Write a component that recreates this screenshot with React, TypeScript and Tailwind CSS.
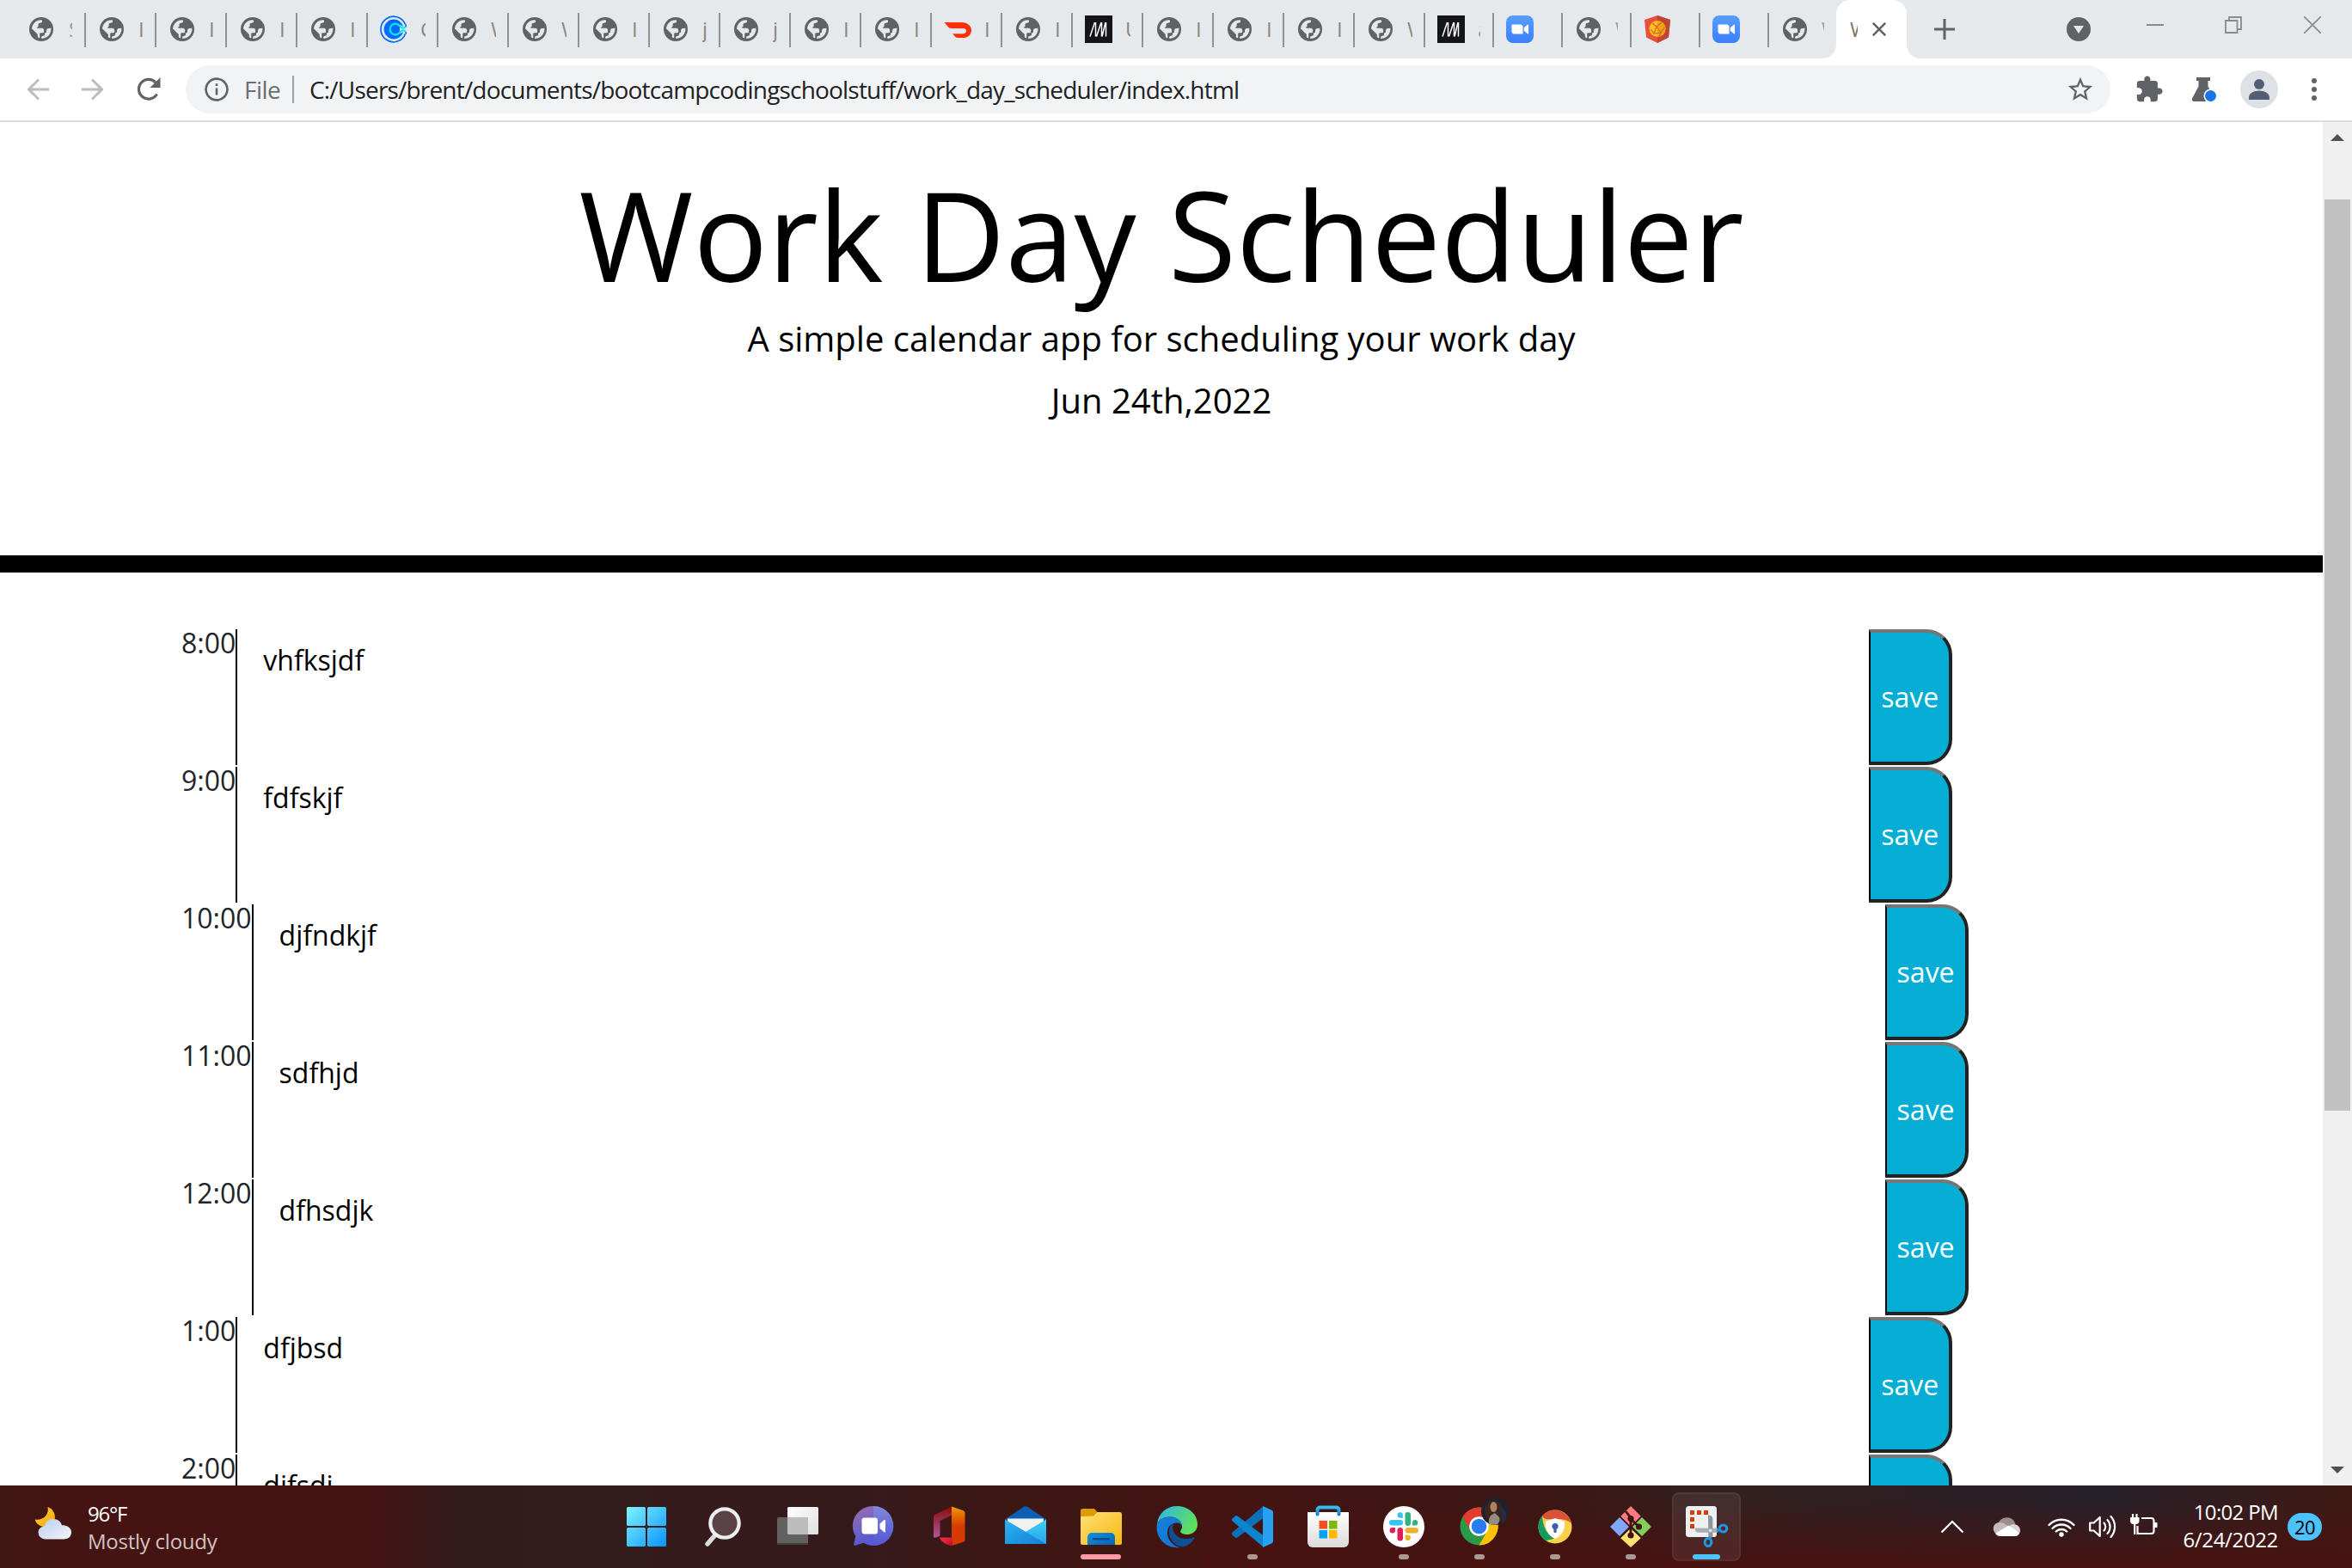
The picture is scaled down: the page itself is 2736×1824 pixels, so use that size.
import React from "react";

type IconKind = "globe" | "calendly" | "doordash" | "m" | "zoom" | "shield";

/* ---------- tab icons ---------- */

function Globe() {
  return (
    <svg viewBox="0.5 0 32 32" className="size-8 shrink-0">
      <circle cx="16.5" cy="16" r="14" fill="#5f6368" />
      <path
        d="M5.5 15.5C5.8 9.5 10.5 5.4 16 5.2c1.4 0 1.6.6 1.6 1.6 0 1.400-1 1.900-2.600 1.900-1.500 0-1.900.800-1.900 1.900v1.600c0 .700-.500 1.100-1.300 1.200v1.400h5.400c1.600 0 2.400.900 2.400 2.400v1.700c0 .900-.600 1.300-1.400 1.300h-2.100c-1 0-1.400.500-1.400 1.500v4.600c-1.600 0-2.400-.800-2.400-2.200v-2.200L7.500 17.200c-.700-.700-1.300-1-2-1.700z"
        fill="#e5e9ec"
      />
      <path
        d="M27.800 14.500c.800 6-3.600 11.700-9.600 12.300-1.500.100-2-.400-1.600-1.500.300-.900 1-1.300 2.200-1.500 1.300-.200 1.700-.700 1.700-1.800 0-1.400.700-2.100 2-2.200v-1.700c0-2.100 1-2.900 2.700-3 1 0 1.700-.200 2.600-.600z"
        fill="#e5e9ec"
      />
    </svg>
  );
}

function Calendly() {
  return (
    <svg viewBox="0 0 32 32" className="size-8 shrink-0" fill="none">
      <path d="M29.500 10.500a14.800 14.800 0 1 0 0 11" stroke="#006bff" strokeWidth="1.700" />
      <path d="M29.800 10.300c1.600 2.200-.300 3.700-2.300 5.200M29.800 21.700c1.600-2.200-.300-3.700-2.300-5.200" stroke="#006bff" strokeWidth="1.500" />
      <circle cx="16" cy="16" r="11.400" fill="#006bff" />
      <path d="M32 16l-9-5.500v11z" fill="#e5e9ec" />
      <path d="M30 13.200c-3 3-5.500.800-7.200-1.200C21 10 19 9.500 17 9.700a6.400 6.400 0 0 0 0 12.600c2 .200 4-.300 5.800-2.300 1.700-2 4.200-4.200 7.200-1.200" stroke="#0ae8f0" strokeWidth="2.200" />
    </svg>
  );
}

function DoorDash() {
  return (
    <svg viewBox="0 0 32 32" className="size-8 shrink-0">
      <path d="M.500 8H21c6 0 11 4 11 9s-4 9-9 9h-7c-1.200 0-2-.500-2.700-1.200L10 21.300h12c2.600 0 4-1.600 4-3.400s-1.400-3-4-3H8.500c-1.500 0-2.300-.400-3.100-1.200z" fill="#ff3008" />
    </svg>
  );
}

function MLogo() {
  return (
    <svg viewBox="0 0 32 32" className="size-8 shrink-0">
      <rect width="32" height="32" fill="#14141a" />
      <path d="M6 24.500L11.500 8M12.500 8v16.500M13.500 24.500L19 8M19.500 8v16.500M20 24.500L24 8M24.500 8v16.500" stroke="#fff" strokeWidth="1.500" fill="none" />
    </svg>
  );
}

function ZoomLogo() {
  return (
    <svg viewBox="0 0 32 32" className="size-8 shrink-0">
      <rect width="32" height="32" rx="8" fill="url(#zoomBg)" />
      <path d="M6.500 10.500h10a3 3 0 0 1 3 3v8h-10a3 3 0 0 1-3-3z" fill="#fff" />
      <path d="M20.800 14.300l4.200-3.500c.500-.400 1-.200 1 .400v9.600c0 .600-.500.800-1 .400l-4.200-3.500z" fill="#fff" />
    </svg>
  );
}

function Shield() {
  return (
    <svg viewBox="0 0 32 32" className="size-8 shrink-0">
      <path d="M16 0l15 5-2 20.500L16 32 3 25.500 1 5z" fill="#e8503e" />
      <path d="M16 0l15 5-2 20.500L16 32z" fill="#c14437" />
      <circle cx="16" cy="15.500" r="9.500" fill="#ffc01e" />
      <path d="M16 6a9.500 9.500 0 0 1 0 19z" fill="#eea50f" />
      <path d="M10 9l5 4 6-5M15 13l-3 8 8-1 4-6M12 21l-4-5M20 20l-2 5M15 13l5 7" stroke="#d9633a" strokeWidth="1.200" fill="none" />
    </svg>
  );
}

function TabIcon({ kind }: { kind: IconKind }) {
  switch (kind) {
    case "calendly":
      return <Calendly />;
    case "doordash":
      return <DoorDash />;
    case "m":
      return <MLogo />;
    case "zoom":
      return <ZoomLogo />;
    case "shield":
      return <Shield />;
    default:
      return <Globe />;
  }
}

const wideTabs: [IconKind, string][] = [
  ["globe", "I"],
  ["globe", "I"],
  ["globe", "I"],
  ["globe", "I"],
  ["calendly", "C"],
  ["globe", "W"],
  ["globe", "W"],
  ["globe", "I"],
  ["globe", "j"],
  ["globe", "j"],
  ["globe", "I"],
  ["globe", "I"],
  ["doordash", "I"],
  ["globe", "I"],
  ["m", "U"],
  ["globe", "I"],
  ["globe", "I"],
  ["globe", "I"],
  ["globe", "W"],
];

const narrowTabs: [IconKind, string][] = [
  ["m", "a"],
  ["zoom", ""],
  ["globe", "W"],
  ["shield", ""],
  ["zoom", ""],
  ["globe", "W"],
];

function Separator() {
  return <span className="mt-[2px] h-10 w-[2px] shrink-0 bg-[#8e9397]" />;
}

function TabStrip() {
  return (
    <div className="flex h-[68px] bg-[#e5e9ec]">
      <div className="flex w-[98px] shrink-0 items-center pl-[32px]">
        <Globe />
        <span className="ml-[16px] w-[4px] overflow-hidden text-[24px] leading-8 text-[#a39a94]">S</span>
      </div>
      {wideTabs.map(([kind, text], i) => (
        <div key={i} className="flex w-[82px] shrink-0 items-center">
          <Separator />
          <span className="w-[14px] shrink-0" />
          <TabIcon kind={kind} />
          <span className="ml-[15px] w-[6px] shrink-0 overflow-hidden text-[24px] leading-8 text-[#8d8580]">{text}</span>
        </div>
      ))}
      {narrowTabs.map(([kind, text], i) => (
        <div key={i} className="flex w-[80px] shrink-0 items-center">
          <Separator />
          <span className="w-[14px] shrink-0" />
          <TabIcon kind={kind} />
          <span className="ml-[15px] w-[3px] shrink-0 overflow-hidden text-[24px] leading-8 text-[#a39a94]">{text}</span>
        </div>
      ))}
      <div className="flex h-[68px] shrink-0 items-end">
        <svg viewBox="0 0 16 16" className="-ml-4 size-4">
          <path d="M16 0v16H0C9 16 16 9 16 0z" fill="#fff" />
        </svg>
        <div className="flex h-[68px] w-[82px] items-center rounded-t-[16px] bg-white pl-4">
          <span className="w-[9px] overflow-hidden text-[24px] leading-8 text-[#77726e]">W</span>
          <svg viewBox="0 0 16 16" className="ml-[17px] size-4" stroke="#5f6368" strokeWidth="2.600">
            <path d="M.8.800l14.400 14.400M15.200.800L.8 15.200" />
          </svg>
        </div>
        <svg viewBox="0 0 16 16" className="size-4">
          <path d="M0 0v16h16C7 16 0 9 0 0z" fill="#fff" />
        </svg>
      </div>
      <div className="flex flex-1 items-start">
        <svg viewBox="0 0 24 24" className="mt-[22px] ml-[16px] size-6" stroke="#5f6368" strokeWidth="3">
          <path d="M12 0v24M0 12h24" />
        </svg>
        <svg viewBox="0 0 28 28" className="mt-5 ml-auto size-7">
          <circle cx="14" cy="14" r="14" fill="#5f6368" />
          <path d="M8 10h12l-6 9z" fill="#e5e9ec" />
        </svg>
        <div className="mt-[28px] ml-[65px] h-[2px] w-5 bg-[#8a8a8a]" />
        <svg viewBox="0 0 20 20" className="mt-[19px] ml-[71px] size-5" fill="none" stroke="#8a8a8a" strokeWidth="1.800">
          <path d="M1 5h13.500v14H1zM5 5V1h14v14h-4.500" />
        </svg>
        <svg viewBox="0 0 20 20" className="mt-[19px] mr-[36px] ml-[72px] size-5" stroke="#8a8a8a" strokeWidth="1.700">
          <path d="M0 0l20 20M20 0L0 20" />
        </svg>
      </div>
    </div>
  );
}

/* ---------- toolbar ---------- */

function Toolbar() {
  return (
    <div className="flex h-[74px] items-center border-b-2 border-[#dcdcdc] bg-white">
      <svg viewBox="0 0 26 26" className="ml-[31px] size-[26px]" fill="none" stroke="#babcbe" strokeWidth="3">
        <path d="M26 13H2.500M14 1.500L2.500 13 14 24.500" />
      </svg>
      <svg viewBox="0 0 26 26" className="ml-[38px] size-[26px]" fill="none" stroke="#babcbe" strokeWidth="3">
        <path d="M0 13h23.500M12 1.500L23.500 13 12 24.500" />
      </svg>
      <svg viewBox="0 0 28 28" className="ml-[38px] size-7" fill="none">
        <path d="M23.500 19.500A11.300 11.300 0 1 1 22 6" stroke="#5f6368" strokeWidth="3.200" />
        <path d="M27.500 0v12h-12z" fill="#5f6368" />
      </svg>
      <div className="ml-[29px] flex h-14 w-[2239px] items-center rounded-full bg-[#f1f3f4]">
        <svg viewBox="0 0 28 28" className="ml-[22px] size-7" fill="none" stroke="#5f6368" strokeWidth="2.600">
          <circle cx="14" cy="14" r="12.400" />
          <path d="M14 12.500v8M14 7.300v2.800" />
        </svg>
        <span className="-mt-px ml-[18px] w-[42px] text-[28px] tracking-[-0.500px] text-[#6a6d71]">File</span>
        <span className="ml-[14px] h-8 w-[2px] bg-[#9aa0a6]" />
        <span className="-mt-px ml-[18px] text-[28px] tracking-[-0.810px] whitespace-nowrap text-[#202124]">
          C:/Users/brent/documents/bootcampcodingschoolstuff/work_day_scheduler/index.html
        </span>
        <svg viewBox="0 0 24 24" className="mr-[18px] ml-auto size-[34px]" fill="#5f6368">
          <path d="M22 9.240l-7.190-.620L12 2 9.190 8.630 2 9.240l5.460 4.730L5.820 21 12 17.270 18.180 21l-1.630-7.030L22 9.240zM12 15.400l-3.760 2.270 1-4.280-3.320-2.880 4.380-.380L12 6.100l1.710 4.040 4.380.380-3.320 2.880 1 4.280L12 15.400z" />
        </svg>
      </div>
      <svg viewBox="0 0 24 24" className="ml-[28px] size-[34px]" fill="#5f6368">
        <path d="M20.500 11H19V7c0-1.100-.900-2-2-2h-4V3.500C13 2.120 11.880 1 10.500 1S8 2.120 8 3.500V5H4c-1.100 0-1.990.900-1.990 2v3.800H3.500c1.490 0 2.700 1.210 2.700 2.700s-1.210 2.700-2.700 2.700H2V20c0 1.100.900 2 2 2h3.800v-1.500c0-1.490 1.210-2.700 2.700-2.700 1.490 0 2.700 1.210 2.700 2.700V22H17c1.100 0 2-.900 2-2v-4h1.500c1.380 0 2.500-1.120 2.500-2.500S21.880 11 20.500 11z" />
      </svg>
      <svg viewBox="0 0 30 30" className="ml-[32px] size-[30px]">
        <path d="M6 1h16v4h-2.500v6.500L27 25c1 2-.300 4-2.300 4H3.300C1.300 29 .2 27 1.200 25.200L8.500 11.500V5H6z" fill="#5f6368" />
        <circle cx="22.500" cy="22.500" r="8" fill="#fff" />
        <circle cx="22.500" cy="22.500" r="6.500" fill="#1a73e8" />
      </svg>
      <svg viewBox="0 0 44 44" className="ml-[27px] size-11">
        <circle cx="22" cy="22" r="22" fill="#dee1e6" />
        <circle cx="22" cy="16" r="6" fill="#535e75" />
        <path d="M10 34v-2.500c0-5 5.500-8 12-8s12 3 12 8V34z" fill="#535e75" />
      </svg>
      <svg viewBox="0 0 6 26" className="ml-[39px] h-[26px] w-[6px]" fill="#5f6368">
        <circle cx="3" cy="3" r="3" />
        <circle cx="3" cy="13" r="3" />
        <circle cx="3" cy="23" r="3" />
      </svg>
    </div>
  );
}

/* ---------- page ---------- */

const blocks = [
  { hour: "8:00", text: "vhfksjdf" },
  { hour: "9:00", text: "fdfskjf" },
  { hour: "10:00", text: "djfndkjf" },
  { hour: "11:00", text: "sdfhjd" },
  { hour: "12:00", text: "dfhsdjk" },
  { hour: "1:00", text: "dfjbsd" },
  { hour: "2:00", text: "djfsdj" },
];

function Planner() {
  return (
    <main className="h-[1586px] flex-1 overflow-hidden bg-white text-black">
      <header className="flex h-[524px] flex-col items-center border-b-[20px] border-black pt-[44px]">
        <h1 className="text-[144px] leading-[173px]">Work Day Scheduler</h1>
        <p className="mt-[5px] text-[40px] leading-[60px]">A simple calendar app for scheduling your work day</p>
        <p className="mt-3 text-[40px] leading-[60px]">Jun 24th,2022</p>
      </header>
      <section className="flex flex-col gap-[2px] pt-[66px] pl-[211px]">
        {blocks.map((b) => (
          <div key={b.hour} className="flex h-[158px] text-[32px]">
            <div className="shrink-0 border-r-2 border-black leading-8 text-[#212529]">{b.hour}</div>
            <div className="w-[1898px] shrink-0 pt-5 pl-[30px] leading-8">{b.text}</div>
            <button className="w-[97px] shrink-0 rounded-r-[30px] border-4 border-t-[#767676] border-r-[#222] border-b-[#222] border-l-2 border-l-black bg-[#06aed5] text-white">
              save
            </button>
          </div>
        ))}
      </section>
    </main>
  );
}

function Scrollbar() {
  return (
    <div className="flex h-[1586px] w-[34px] shrink-0 flex-col items-center bg-[#f0f0f0]">
      <svg viewBox="0 0 16 8" className="mt-[14px] h-2 w-4">
        <path d="M8 0l8 8H0z" fill="#505050" />
      </svg>
      <div className="mt-[68px] h-[1060px] w-[30px] bg-[#c1c1c1]" />
      <svg viewBox="0 0 16 8" className="mt-auto mb-[14px] h-2 w-4">
        <path d="M0 0h16L8 8z" fill="#505050" />
      </svg>
    </div>
  );
}

/* ---------- taskbar ---------- */

function Defs() {
  const g = (id: string, a: string, b: string, x2 = "1", y2 = "1") => (
    <linearGradient id={id} x1="0" y1="0" x2={x2} y2={y2}>
      <stop offset="0" stopColor={a} />
      <stop offset="1" stopColor={b} />
    </linearGradient>
  );
  return (
    <svg className="absolute size-0">
      <defs>
        <linearGradient id="win" gradientUnits="userSpaceOnUse" x1="1" y1="1" x2="47" y2="47">
          <stop offset="0" stopColor="#7df4ff" />
          <stop offset="1" stopColor="#0a93ff" />
        </linearGradient>
        {g("zoomBg", "#579dff", "#3d80ff", "0", "1")}
        {g("moon", "#ffd52e", "#f5a60a")}
        {g("cloud", "#b9cdf3", "#f4f5f8")}
        {g("task", "#ffffff", "#dedede")}
        {g("chat", "#9a6fae", "#4f57d6", "0.400", "1")}
        {g("chat2", "#7f9bf0", "#5a58cf", "0", "1")}
        {g("offL", "#8a0f0a", "#b0549d", "0", "1")}
        {g("offR", "#f09a00", "#d83b01", "0", "0.500")}
        {g("offB", "#ff2a45", "#b5142a")}
        {g("mailL", "#2eb3ec", "#1280dd")}
        {g("mailR", "#3fd0f8", "#2ba4ea", "0", "1")}
        {g("fold", "#ffe07a", "#f7b80e")}
        {g("foldB", "#1493df", "#0863b5")}
        {g("edgeT", "#2fb4ee", "#5fe05a", "1", "0.500")}
        {g("edgeB", "#1583d8", "#0f72dc")}
        {g("bag", "#ffffff", "#dcdcdc", "0", "1")}
        {g("bagH", "#37bdf5", "#1580d5", "0", "1")}
      </defs>
    </svg>
  );
}

const Start = () => (
  <g fill="url(#win)">
    <rect x="1" y="1" width="22" height="22" rx="1.500" />
    <rect x="25" y="1" width="22" height="22" rx="1.500" />
    <rect x="1" y="25" width="22" height="22" rx="1.500" />
    <rect x="25" y="25" width="22" height="22" rx="1.500" />
  </g>
);

const Search = () => (
  <g>
    <path d="M16.500 33L7 44" stroke="#d9dcde" strokeWidth="5.500" strokeLinecap="round" />
    <circle cx="27" cy="20" r="16.700" fill="#5a4244" stroke="#eceeef" strokeWidth="4.200" />
  </g>
);

const TaskView = () => (
  <g>
    <rect x="12" y="1" width="36" height="32" rx="1.500" fill="url(#task)" />
    <path d="M0 14.500a1.500 1.500 0 0 1 1.500-1.500H36v30.500a1.500 1.500 0 0 1-1.500 1.500h-33A1.500 1.500 0 0 1 0 43.500z" fill="#636060" />
    <path d="M12 13h24v20H13.500a1.500 1.500 0 0 1-1.500-1.500z" fill="#bdbcbc" />
    <path d="M0 43h36v.500a1.500 1.500 0 0 1-1.500 1.500h-33A1.500 1.500 0 0 1 0 43.500z" fill="#454040" />
  </g>
);

const Chat = () => (
  <g>
    <path d="M24 0a23 23 0 1 1-11.500 42.700L3.500 45.800c-1.600.500-2.600-.700-2.200-2.100l2-8.600A23 23 0 0 1 24 0z" fill="url(#chat)" />
    <path d="M24 0a23 23 0 0 1 23 23c0 14-10 23-23 23z" fill="url(#chat2)" opacity=".6" />
    <rect x="10.500" y="13.500" width="18.500" height="19" rx="3" fill="#fff" />
    <path d="M31.500 20.500l4.500-4c1-.900 2-.500 2 .700v12c0 1.200-1 1.600-2 .700l-4.500-4z" fill="#fff" />
  </g>
);

const Office = () => (
  <g>
    <path d="M27 .500l1.500 9.500-15 7v16.500c0 1.500-6.500 4.500-7.500 2.500V13.500c0-2 1-3 2.500-4z" fill="url(#offL)" />
    <path d="M27 .500l13 4.500c1.500.500 2.500 1.500 2.500 3v31c0 1.500-1 2.500-2.500 3L27 46z" fill="url(#offR)" />
    <path d="M13 36.500h15v9l-2 .500c-5-1-10-4-12.500-8z" fill="url(#offB)" />
  </g>
);

const Mail = () => (
  <g>
    <path d="M0 15.500L21.500 1c1.500-1 3.500-1 5 0L48 15.500V18H0z" fill="#0b5fb5" />
    <path d="M3 14.500h42V32H3z" fill="#f1f1f1" />
    <path d="M48 15.500V44H24L14 36z" fill="url(#mailR)" />
    <path d="M0 15.500L48 44H0z" fill="url(#mailL)" />
  </g>
);

const Explorer = () => (
  <g>
    <path d="M0 5.500A2.500 2.500 0 0 1 2.500 3H16l4 4.500V14H0z" fill="#dd9c00" />
    <path d="M0 12l15-.500 4.500-4.500h26A2.500 2.500 0 0 1 48 9.500V43a2 2 0 0 1-2 2H2a2 2 0 0 1-2-2z" fill="url(#fold)" />
    <path d="M8 45V36a5 5 0 0 1 5-5h22a5 5 0 0 1 5 5v9z" fill="url(#foldB)" />
    <rect x="14" y="37" width="20" height="2.500" rx="1.200" fill="#0a4c8b" />
  </g>
);

const Edge = () => (
  <g>
    <path d="M1 20C3 8 12 0 24 0c14 0 24 10 24 21 0 8-6 12-12 12-5 0-8-1.500-8-3.500 0-1.500 2-2.500 2-6 0-5-5-11-14-11C9 12.500 3 16 1 20z" fill="url(#edgeT)" />
    <path d="M1 20c3-5 8-7.500 15-7.500 9 0 14 6 14 11C24 16 13 20 13 31c0 8 6 15 14 17C12 50-2 37 1 20z" fill="url(#edgeB)" />
    <path d="M20 20c-3 2-5 5-5 10 0 9 7 17 16 17.500 6-1.500 10.500-5 13.500-10 .500-1-.500-1.700-1.500-1.200-3 1.500-6 1.700-9 1.700-9 0-15-7-15-13z" fill="#0e4f95" />
    <path d="M20.500 20.500c3.500-2 8-1 9.500 3 0 3.500-2 4.500-2 6 0 2 3 3.500 8 3.500-7 4-15-2-15.500-12.500z" fill="#3c1513" />
  </g>
);

const VSCode = () => (
  <g>
    <path d="M36.500 0v14L6.500 36.500c-1 .700-2 .700-2.800 0L.6 33.700c-1-.900-1-2.200 0-3.100z" fill="#0b70b8" />
    <path d="M.6 14.500l3.100-2.900c.800-.700 1.900-.700 2.800 0L36.500 34v13.500L.6 17.500c-1-.900-1-2.100 0-3z" fill="#0a85d0" />
    <path d="M36 0l10.500 4.800c1 .500 1.500 1.200 1.500 2.200v34c0 1-.500 1.800-1.500 2.300L36 48z" fill="#25a1f0" />
  </g>
);

const Store = () => (
  <g>
    <path d="M0 7h48v35a6 6 0 0 1-6 6H6a6 6 0 0 1-6-6z" fill="url(#bag)" />
    <path d="M11.500 9.500V4.500a3 3 0 0 1 3-3h19a3 3 0 0 1 3 3v5" fill="none" stroke="url(#bagH)" strokeWidth="4" strokeLinecap="round" />
    <rect x="13.500" y="17" width="9.500" height="9.500" fill="#f25022" />
    <rect x="25" y="17" width="9.500" height="9.500" fill="#7fba00" />
    <rect x="13.500" y="28" width="9.500" height="9.500" fill="#00a4ef" />
    <rect x="25" y="28" width="9.500" height="9.500" fill="#ffb900" />
  </g>
);

const Slack = () => (
  <g>
    <circle cx="24" cy="24" r="24" fill="#fff" />
    <g fill="#36c5f0">
      <rect x="7" y="16" width="16" height="6.500" rx="3.200" />
      <path d="M16.500 10.500a3.200 3.200 0 0 1 6.400 0v3.200h-3.200a3.200 3.200 0 0 1-3.200-3.200z" />
    </g>
    <g fill="#2eb67d">
      <rect x="25.500" y="7" width="6.500" height="16" rx="3.200" />
      <path d="M34 22.500v-3.200a3.200 3.200 0 1 1 3.200 3.200z" />
    </g>
    <g fill="#ecb22e">
      <rect x="25.500" y="25" width="15.500" height="6.500" rx="3.200" />
      <path d="M25.500 33.500h3.200a3.200 3.200 0 1 1-3.200 3.200z" />
    </g>
    <g fill="#e01e5a">
      <rect x="16.500" y="25" width="6.500" height="15.500" rx="3.200" />
      <path d="M14 25v3.200A3.200 3.200 0 1 1 10.800 25z" />
    </g>
  </g>
);

const Chrome = () => (
  <g>
    <circle cx="23.500" cy="23.500" r="22" fill="#2a9a47" />
    <path d="M4.500 12.500A22 22 0 0 1 42.600 12.500H23.500a11 11 0 0 0-9.600 16.500z" fill="#e33b2e" />
    <path d="M42.600 12.500A22 22 0 0 1 23.500 45.500L33 29a11 11 0 0 0 0-11l-3-5.500z" fill="#fdc108" />
    <circle cx="23.500" cy="23.500" r="11.300" fill="#fff" />
    <circle cx="23.500" cy="23.500" r="8.800" fill="#2b7bf0" />
    <circle cx="42" cy="6" r="16" fill="#1f222c" />
    <path d="M30 4c2-10 12-14 18-7 5 6 3 14 4 20l-8 2-11-5c-2-3-3-6-3-10z" fill="#3a2420" />
    <ellipse cx="40.500" cy="1" rx="4" ry="6" fill="#b08064" />
    <path d="M37 11l5-3 5 5c1 3 0 6-2 8-4 1.500-8 1-10-1-.500-3 0-6 2-9z" fill="#958b83" />
    <path d="M47 2c4 4 5 12 3 18l3-2c4-7 3-14-6-16z" fill="#232f4a" />
  </g>
);

const SecureBrowser = () => (
  <g>
    <circle cx="24" cy="24" r="19.500" fill="#f9cf4c" />
    <path d="M9 11.500a19.500 19.500 0 0 1 34 8.500c-6-5-12-5-19-5S12 17 9 11.500z" fill="#dc5038" />
    <path d="M9 11.500c1 10 3 20 14 26-3 2-7 1-9.500 3C3 34 2 20 9 11.500z" fill="#159b5d" />
    <path d="M24 14l11 4c1 10-4 17-11 20-7-3-12-10-11-20z" fill="#fff" />
    <circle cx="24" cy="23.500" r="3.600" fill="#3d5fae" />
    <path d="M22.400 24h3.200v5.500a1.600 1.600 0 0 1-3.200 0z" fill="#3d5fae" />
  </g>
);

const GitBash = () => (
  <g>
    <path d="M24 0l12 12-12 12-12-12z" fill="#ff7a80" />
    <path d="M11 13l11 11-11 11L.5 24.500v-1z" fill="#7fa9f8" />
    <path d="M37 13l10.500 10.500v1L37 35 26 24z" fill="#83cf5c" />
    <path d="M24 26l12 11-12 11-12-11z" fill="#ffe072" />
    <path d="M18 6l6 7.500V35M24 15l9.500 9" stroke="#3c1512" strokeWidth="2.800" fill="none" />
    <path d="M11.500 12l25 25M36.500 12L11.500 37" stroke="#3c1512" strokeWidth="1.200" />
    <circle cx="24" cy="14.500" r="3.600" fill="#3c1512" />
    <circle cx="33.500" cy="24" r="3.600" fill="#3c1512" />
    <circle cx="24" cy="34" r="3.600" fill="#3c1512" />
  </g>
);

const Snip = () => (
  <g>
    <rect x="0" y="0" width="36" height="36" rx="3.500" fill="#eef0f2" />
    <g fill="#d83b01">
      <rect x="5" y="5" width="5" height="5" />
      <rect x="13" y="5" width="5" height="5" />
      <rect x="21" y="5" width="5" height="5" />
      <rect x="5" y="13" width="5" height="5" />
      <rect x="5" y="21" width="5" height="5" />
    </g>
    <path d="M26 10.500c3 0 5.300 1.500 5.300 4.500v21h-5z" fill="#8f959b" />
    <path d="M10.500 25.500c0 3 1.500 5.300 4.500 5.300h22v-5z" fill="#a8adb2" />
    <circle cx="28.700" cy="28.300" r="1.600" fill="#e8eaec" />
    <g fill="none" stroke="#2194e0" strokeWidth="3.200">
      <ellipse cx="26" cy="42" rx="3.800" ry="4.500" />
      <ellipse cx="43.500" cy="26" rx="4.200" ry="4" />
      <path d="M36 28.300l4-.500M28.700 36l-.700 3" />
    </g>
  </g>
);

type TaskbarItem = { name: string; art: React.ReactNode; mark?: "folder" | "dot" | "active" };

const apps: TaskbarItem[] = [
  { name: "Start", art: <Start /> },
  { name: "Search", art: <Search /> },
  { name: "Task View", art: <TaskView /> },
  { name: "Chat", art: <Chat /> },
  { name: "Office", art: <Office /> },
  { name: "Mail", art: <Mail /> },
  { name: "File Explorer", art: <Explorer />, mark: "folder" },
  { name: "Edge", art: <Edge /> },
  { name: "Visual Studio Code", art: <VSCode />, mark: "dot" },
  { name: "Store", art: <Store /> },
  { name: "Slack", art: <Slack />, mark: "dot" },
  { name: "Chrome", art: <Chrome />, mark: "dot" },
  { name: "Secure Browser", art: <SecureBrowser />, mark: "dot" },
  { name: "Git Bash", art: <GitBash />, mark: "dot" },
  { name: "Snipping Tool", art: <Snip />, mark: "active" },
];

function TaskbarApp({ app }: { app: TaskbarItem }) {
  const active = app.mark === "active";
  return (
    <div className="flex w-[88.100px] justify-center py-2">
      <div
        className={
          active
            ? "flex h-20 w-20 flex-col items-center rounded-lg border-2 border-white/5 bg-white/[0.07] pt-[14px]"
            : "flex h-20 w-20 flex-col items-center pt-4"
        }
      >
        <svg viewBox="0 0 48 48" className="size-12 overflow-visible" aria-label={app.name}>
          {app.art}
        </svg>
        {app.mark === "folder" && <span className="mt-2 h-[6px] w-[47px] rounded-full bg-[#ff99a4]" />}
        {app.mark === "dot" && <span className="mt-2 h-[6px] w-3 rounded-full bg-[#aa9796]" />}
        {active && <span className="mt-2 h-[6px] w-8 rounded-full bg-[#4cc2ff]" />}
      </div>
    </div>
  );
}

function Weather() {
  return (
    <div className="flex w-[708px] shrink-0 items-start">
      <svg viewBox="0 0 44 40" className="mt-6 ml-10 h-10 w-11">
        <path d="M15.500 1c12 4 11 22-1.500 23C6 24.500 1.500 20 .8 15.500 10 17 17.500 10 15.500 1z" fill="url(#moon)" />
        <path d="M12 38.500a8 8 0 0 1-7.500-7.700c0-4 3-7.300 7.500-7.800C13 18 17 15 22 15s8.800 2.800 10 7.200c6.500-.200 11 3.300 11 8.300s-4 8-8.500 8z" fill="url(#cloud)" />
      </svg>
      <div className="mt-[17px] ml-[18px] text-[24px] leading-8">
        <div className="tracking-[-1.200px] text-white">96°F</div>
        <div className="tracking-[-0.250px] text-[#d0c4c3]">Mostly cloudy</div>
      </div>
    </div>
  );
}

function Tray() {
  return (
    <div className="ml-auto flex items-center text-white">
      <svg viewBox="0 0 28 16" className="h-4 w-7" fill="none" stroke="#fff" strokeWidth="2.200">
        <path d="M1.500 14.500L14 2l12.500 12.500" />
      </svg>
      <svg viewBox="0 0 32 22" className="ml-[33px] h-[22px] w-8">
        <path d="M6 7.500C8 3 12 .2 16.500.200c5 0 9 3.300 9.800 7.800L18 11z" fill="#9c8d8f" />
        <path d="M3 18.500C-2 13 2 6 8 6c3 0 5 .800 7 2.200l4 3z" fill="#c5b9ba" />
        <path d="M18.500 11c2.500-3 6-3.700 8.500-2.500C31 9.500 33 14 31.500 18z" fill="#ddd5d6" />
        <path d="M3 18.500l15.700-9 12.600 8.500c-.500 2.300-2.300 4-5 4H8.500c-2.500 0-4.500-1.300-5.500-3.500z" fill="#fff" />
      </svg>
      <svg viewBox="0 0 32 24" className="ml-[32px] h-6 w-8" fill="none" stroke="#fff" strokeWidth="2.400" strokeLinecap="round">
        <path d="M1.500 10a20 20 0 0 1 29 0M5.500 14a14.500 14.500 0 0 1 21 0M9.800 17.500a8.800 8.800 0 0 1 12.400 0" />
        <circle cx="16" cy="21" r="2.700" fill="#fff" stroke="none" />
      </svg>
      <svg viewBox="0 0 32 28" className="ml-4 h-7 w-8" fill="none" stroke="#fff" strokeWidth="2.200" strokeLinejoin="round" strokeLinecap="round">
        <path d="M1.200 9.500h4.500l7-6.500v22l-7-6.500H1.200zM17.500 9.500a7 7 0 0 1 0 9M21.500 6a12 12 0 0 1 0 16M25.500 2a18 18 0 0 1 0 24" />
      </svg>
      <svg viewBox="0 0 32 26" className="-mt-1 ml-4 h-[26px] w-8" fill="none" stroke="#fff" strokeWidth="2.200">
        <path d="M0 4h10.500v4a4 4 0 0 1-4 4H4a4 4 0 0 1-4-4z" fill="#fff" stroke="none" />
        <path d="M3 0v5M7.500 0v5M5.200 11v13" />
        <path d="M13 5h11.500a3 3 0 0 1 3 3v12a3 3 0 0 1-3 3H8.500V14" />
        <path d="M28 10h3.500v6H28z" fill="#fff" stroke="none" />
      </svg>
      <div className="-mt-[3px] ml-[30px] flex w-[110px] flex-col items-end text-[24px] leading-8 whitespace-nowrap">
        <div className="tracking-[-0.650px]">10:02 PM</div>
        <div className="tracking-[-0.350px]">6/24/2022</div>
      </div>
      <div className="mr-[35px] ml-[11px] flex h-8 w-10 items-center justify-center rounded-full bg-[#4cc2ff] text-[22px] tracking-[-0.500px] text-black">
        20
      </div>
    </div>
  );
}

function Taskbar() {
  return (
    <footer className="flex h-24 bg-[#3a1715] bg-[linear-gradient(to_right,#411712_0px,#451312_120px,#451312_420px,#331b1c_530px,#361a1b_1000px,#3d1714_1200px,#431412_1400px,#3b1715_1800px,#33201f_2000px,#2e2024_2200px,#27212b_2450px,#3f1a13_2736px)]">
      <div className="flex h-24 w-full bg-[linear-gradient(to_bottom,transparent_15%,#481210_100%)] bg-[length:1336px_96px] bg-right bg-no-repeat">
        <Weather />
        <nav className="flex">
          {apps.map((app) => (
            <TaskbarApp key={app.name} app={app} />
          ))}
        </nav>
        <Tray />
      </div>
    </footer>
  );
}

export default function App() {
  return (
    <div className="h-[1824px] w-[2736px] overflow-hidden bg-white font-['Open_Sans','Noto_Sans',sans-serif]">
      <Defs />
      <TabStrip />
      <Toolbar />
      <div className="flex">
        <Planner />
        <Scrollbar />
      </div>
      <Taskbar />
    </div>
  );
}
